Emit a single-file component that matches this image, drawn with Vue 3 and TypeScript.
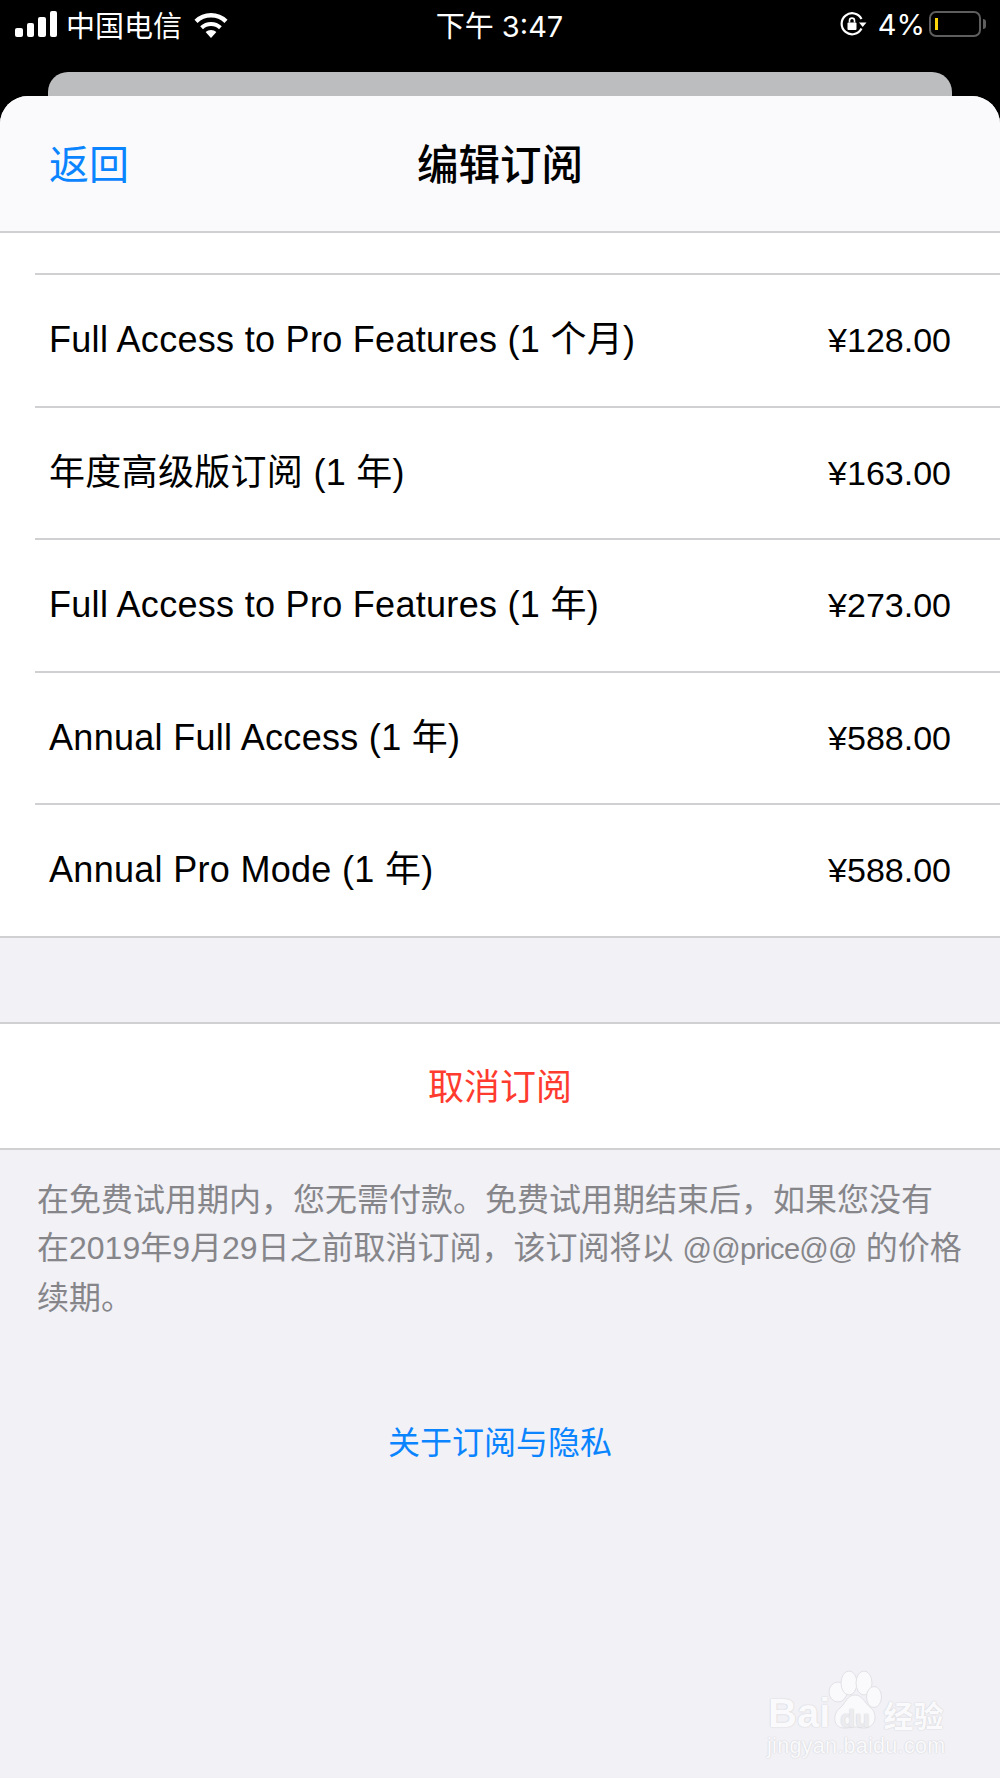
<script setup lang="ts">
type Plan = { name: string; price: string }

const plans: Plan[] = [
  { name: 'Full Access to Pro Features (1 个月)', price: '¥128.00' },
  { name: '年度高级版订阅 (1 年)', price: '¥163.00' },
  { name: 'Full Access to Pro Features (1 年)', price: '¥273.00' },
  { name: 'Annual Full Access (1 年)', price: '¥588.00' },
  { name: 'Annual Pro Mode (1 年)', price: '¥588.00' }
]

const signalBars = [9, 14, 20, 26]
</script>

<template>
  <div class="screen">
    <div class="status-bar">
      <div class="status-left">
        <div class="signal">
          <span v-for="h in signalBars" :key="h" class="bar" :style="{ height: h + 'px' }"></span>
        </div>
        <span class="carrier">中国电信</span>
        <svg class="wifi" width="36" height="27" viewBox="0 0 36 27">
          <path d="M18 27 L12.6 21 A8 8 0 0 1 23.4 21 Z" fill="#fff" />
          <path d="M8.6 16.8 A13.6 13.6 0 0 1 27.4 16.8" fill="none" stroke="#fff" stroke-width="4" />
          <path d="M3 10.4 A21.5 21.5 0 0 1 33 10.4" fill="none" stroke="#fff" stroke-width="4.4" />
        </svg>
      </div>
      <div class="status-time">下午 3:47</div>
      <div class="status-right">
        <svg class="lock" width="27" height="24" viewBox="0 0 27 24">
          <path d="M21.5 16.5 A10.5 10.5 0 1 1 21.5 7" fill="none" stroke="#fff" stroke-width="2.2" />
          <path d="M19 10.5 L26.5 10.5 L22.7 15 Z" fill="#fff" />
          <rect x="7.5" y="10.5" width="9" height="7.5" rx="1" fill="#fff" />
          <path d="M9.5 10.5 V8.6 A2.5 2.5 0 0 1 14.5 8.6 V10.5" fill="none" stroke="#fff" stroke-width="1.6" />
        </svg>
        <span class="percent">4%</span>
        <div class="battery">
          <span class="level"></span>
        </div>
        <span class="battery-tip"></span>
      </div>
    </div>

    <div class="back-card"></div>

    <div class="sheet">
      <header class="nav">
        <span class="nav-back">返回</span>
        <span class="nav-title">编辑订阅</span>
      </header>

      <div class="list">
        <div class="list-top"></div>
        <div v-for="plan in plans" :key="plan.name" class="row">
          <span>{{ plan.name }}</span>
          <span class="price">{{ plan.price }}</span>
        </div>
      </div>

      <div class="cancel">取消订阅</div>

      <p class="note">在免费试用期内，您无需付款。免费试用期结束后，如果您没有在2019年9月29日之前取消订阅，该订阅将以 <span class="token">@@price@@</span> 的价格续期。</p>

      <div class="about">关于订阅与隐私</div>
    </div>

    <div class="watermark">
      <svg class="paw" width="58" height="62" viewBox="0 0 58 62">
        <ellipse cx="12" cy="22" rx="9" ry="10" fill="#fafafc" stroke="#e2e2e6" />
        <ellipse cx="23" cy="13" rx="8" ry="12" fill="#fafafc" stroke="#e2e2e6" />
        <ellipse cx="38" cy="13" rx="8" ry="12" fill="#fafafc" stroke="#e2e2e6" />
        <ellipse cx="48" cy="27" rx="7.5" ry="10.5" fill="#fafafc" stroke="#e2e2e6" />
        <path d="M29 25 C37 25 38 33 45 38 C52 44 50 58 38 58 C33 58 33 57 29 57 C25 57 24 58 18 58 C7 58 6 44 14 38 C20 33 21 25 29 25 Z" fill="#fafafc" stroke="#e2e2e6" />
      </svg>
      <div class="wm-logo">
        <span class="wm-bai">Bai</span>
        <span class="wm-du">du</span>
        <span class="wm-cn">经验</span>
      </div>
      <div class="wm-url">jingyan.baidu.com</div>
    </div>
  </div>
</template>

<style scoped>
.screen {
  position: relative;
  width: 1000px;
  height: 1778px;
  overflow: hidden;
  background: #000;
  font-family: "Liberation Sans", "Noto Sans CJK SC", sans-serif;
  color: #000;
}

.status-bar {
  height: 72px;
  box-sizing: border-box;
  padding: 0 14px 24px 15px;
  display: grid;
  grid-template-columns: 1fr auto 1fr;
  align-items: center;
  color: #fff;
  font-family: Inter, "Noto Sans CJK SC", sans-serif;
  font-size: 29px;
}

.status-left {
  display: flex;
  align-items: center;
}

.signal {
  display: flex;
  align-items: flex-end;
  gap: 4px;
  height: 26px;
}

.bar {
  width: 7.5px;
  border-radius: 2px;
  background: #fff;
}

.carrier {
  margin-left: 9px;
}

.wifi {
  margin-left: 11px;
}

.status-time {
  margin-left: -2px;
}

.status-right {
  display: flex;
  align-items: center;
  justify-content: flex-end;
}

.percent {
  margin-left: 11px;
}

.battery {
  width: 52px;
  height: 26px;
  box-sizing: border-box;
  margin-left: 4px;
  padding: 5px 4px;
  border: 2px solid #5e5e5e;
  border-radius: 7px;
}

.level {
  display: block;
  width: 3px;
  height: 12px;
  background: #ffd60a;
}

.battery-tip {
  width: 3px;
  height: 10px;
  margin-left: 2px;
  border-radius: 0 3px 3px 0;
  background: #5e5e5e;
}

.back-card {
  height: 24px;
  margin: 0 48px;
  border-radius: 20px 20px 0 0;
  background: #bcbdbf;
}

.sheet {
  height: 1682px;
  border-radius: 28px 28px 0 0;
  overflow: hidden;
  background: #f1f1f6;
}

.nav {
  position: relative;
  height: 137px;
  box-sizing: border-box;
  padding-top: 4px;
  display: flex;
  align-items: center;
  justify-content: center;
  border-bottom: 2px solid #d0d0d3;
  background: #fafafc;
  font-size: 40px;
  line-height: 1;
}

.nav-back {
  position: absolute;
  left: 49px;
  top: 49px;
  color: #0a84ff;
}

.nav-title {
  font-size: 41.5px;
  font-weight: 500;
}

.list {
  background: #fff;
  border-bottom: 2px solid #d0d0d3;
}

.list-top {
  height: 40px;
}

.row {
  height: 132.6px;
  box-sizing: border-box;
  margin-left: 35px;
  padding: 0 49px 0 14px;
  display: flex;
  align-items: baseline;
  justify-content: space-between;
  border-top: 2px solid #d0d0d3;
  font-size: 36px;
  line-height: 130px;
  letter-spacing: 0.3px;
}

.price {
  font-size: 34px;
  letter-spacing: 0;
}

.cancel {
  margin-top: 84px;
  height: 128px;
  box-sizing: border-box;
  padding-bottom: 4px;
  display: flex;
  align-items: center;
  justify-content: center;
  border-top: 2px solid #d0d0d3;
  border-bottom: 2px solid #d0d0d3;
  background: #fff;
  color: #ff3b30;
  font-size: 36px;
}

.note {
  margin: 26px 37px 0;
  color: #86868a;
  font-size: 32px;
  line-height: 48.5px;
}

.token {
  font-size: 29px;
  letter-spacing: -0.7px;
}

.about {
  margin-top: 95px;
  text-align: center;
  color: #0a84ff;
  font-size: 32px;
}

.watermark {
  position: absolute;
  left: 766px;
  top: 1670px;
  width: 196px;
  color: #fafafc;
  text-shadow: 0 0 1.5px #c4c4c8;
}

.paw {
  position: absolute;
  left: 60px;
  top: 0;
}

.wm-logo {
  position: absolute;
  left: 2px;
  top: 20px;
  display: flex;
  align-items: baseline;
  white-space: nowrap;
  font-family: "Liberation Sans", sans-serif;
  font-weight: 700;
  line-height: 46px;
}

.wm-bai {
  font-size: 40px;
}

.wm-du {
  margin-left: 10px;
  font-size: 24px;
  color: #ececf0;
}

.wm-cn {
  margin-left: 14px;
  font-family: "Noto Sans CJK SC", sans-serif;
  font-size: 30px;
}

.wm-url {
  position: absolute;
  left: 1px;
  top: 64px;
  white-space: nowrap;
  font-family: "Liberation Sans", sans-serif;
  font-size: 21.5px;
  letter-spacing: 0.3px;
}
</style>
